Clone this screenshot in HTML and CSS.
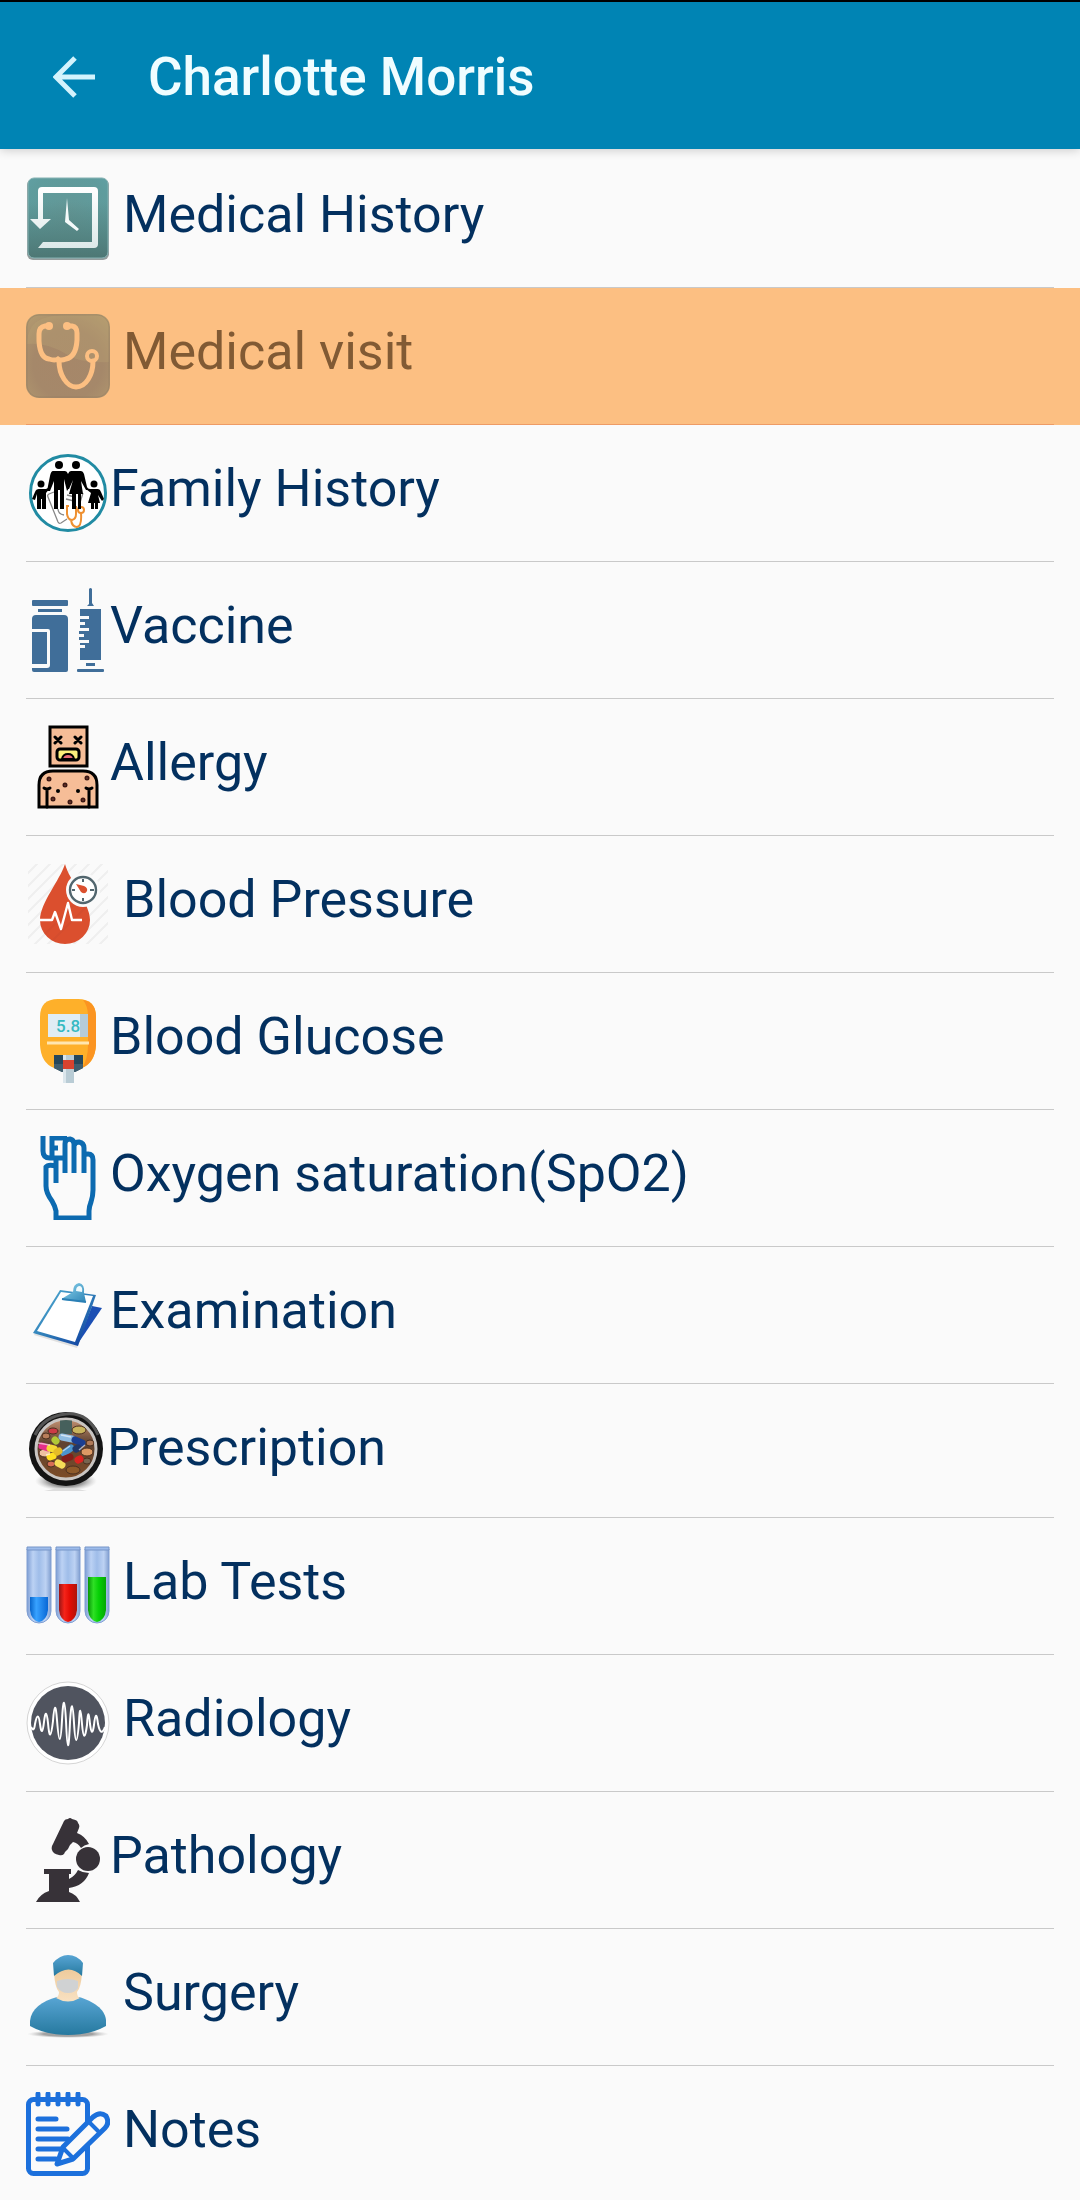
FILE: index.html
```html
<!DOCTYPE html>
<html lang="en">
<head>
<meta charset="UTF-8">
<meta name="viewport" content="width=device-width, initial-scale=1">
<title>Charlotte Morris</title>
<link rel="stylesheet" href="styles.css">
</head>
<body>

<!-- App bar -->
<header class="app-bar">
  <button class="back" type="button" aria-label="Back">
    <svg viewBox="0 0 42 42"><path d="M42 21H5M22 2L3 21l19 19" fill="none" stroke="#d3f3fd" stroke-width="5"/></svg>
  </button>
  <h1>Charlotte Morris</h1>
</header>

<!-- Record menu -->
<nav class="menu">
  <a class="item" href="#history">
    <svg class="icon" viewBox="0 0 84 84">
      <defs>
        <radialGradient id="teal" cx=".5" cy=".45" r=".75"><stop offset="0" stop-color="#639796"/><stop offset=".7" stop-color="#5f9c9d"/><stop offset="1" stop-color="#62a1a6"/></radialGradient>
        <linearGradient id="tealDark" x2="0" y2="1"><stop offset=".3" stop-color="#4d7774" stop-opacity="0"/><stop offset="1" stop-color="#4d7774"/></linearGradient>
        <linearGradient id="silver" x2="0" y2="1"><stop offset="0" stop-color="#fff"/><stop offset="1" stop-color="#dde9e9"/></linearGradient>
      </defs>
      <rect x="1" y="2" width="82" height="81" rx="6" fill="#949c9c"/>
      <rect x="2" y="1" width="80" height="80" rx="6" fill="url(#teal)"/>
      <rect x="2" y="1" width="80" height="80" rx="6" fill="url(#tealDark)" stroke="#85b2b3"/>
      <path d="M12 42V14q0-4 4-4h52q4 0 4 4v53q0 4-4 4H12l5-6h49V16H17v26h8L14 52 4 42z" fill="url(#silver)"/>
      <path d="M41 21l2 22 10 9-2 2-12-9z" fill="#f5fafa"/>
    </svg>
    <span class="label spaced">Medical History</span>
  </a>

  <a class="item selected" href="#visit">
    <svg class="icon" viewBox="0 0 84 84">
      <defs>
        <radialGradient id="brown" cx=".5" cy=".6" r=".75"><stop offset="0" stop-color="#a68769"/><stop offset=".55" stop-color="#a5886a"/><stop offset="1" stop-color="#b39b70"/></radialGradient>
      </defs>
      <rect width="84" height="84" rx="13" fill="url(#brown)"/>
      <path d="M1 30C2 4 20 2 40 1h30q13 0 13 13v34q-28 2-43-8Q20 28 1 30z" fill="#bea575" opacity=".3"/>
      <rect x="1" y="1" width="82" height="82" rx="12" fill="none" stroke="#8f7b61" stroke-opacity=".4"/>
      <g fill="none" stroke="#fcbf82" stroke-width="5" stroke-linecap="round">
        <path d="M23 12h-4q-6 1-6 8v7q1 17 10 18 6 2 9 0 3 2 8 0 10-2 11-19v-7q0-6-5-7h-4M33 47c0 14 8 26 17 26 10 0 17-12 17-26"/>
        <circle cx="66" cy="42" r="5" stroke-width="4"/>
      </g>
      <circle cx="23" cy="12" r="4" fill="#fcbf82"/>
      <circle cx="41" cy="12" r="4" fill="#fcbf82"/>
    </svg>
    <span class="label spaced">Medical visit</span>
  </a>

  <a class="item" href="#family">
    <svg class="icon" viewBox="0 0 84 84">
      <circle cx="42" cy="42" r="37.500" fill="#fff" stroke="#218ba3" stroke-width="3"/>
      <g fill="none" stroke="#888" stroke-width="1.300">
        <path d="M28 41l-5 2q-2 1-1 3l10 25q1 2 3 1l6-4M57 42l-5 16M41 44l8 2M40 48l8 2M32 58q0 5 6 6"/>
      </g>
      <g fill="none" stroke="#ee9031" stroke-width="2">
        <path d="M43 55h-2v8q1 6 5 6 4-1 4-6v-7h-2M45 69q1 7 6 7 5-1 4-14"/>
        <circle cx="55" cy="59" r="3"/>
      </g>
      <circle cx="33" cy="14" r="4"/><circle cx="50" cy="14" r="4"/>
      <circle cx="15" cy="33" r="3.500"/><circle cx="68" cy="33" r="3.500"/>
      <!-- parents -->
      <path d="M27 20h12q2 0 3 3l1 14-2 3-3-12v30h-4V39h-2v19h-4V30l-4 10h-3l3-15q1-5 3-5z"/>
      <path d="M45 20h10q2 0 3 3l3 13 2 3h-3l-5-9 2 13h-2v15h-3V43h-2v15h-4V43h-3l4-14-4 9h-2l1-15q1-3 3-3z"/>
      <!-- children -->
      <path d="M24 37l-4 5v16h-4V48h-1v10h-4V43l-2 6-3-1 3-7q1-3 4-3h7l4-2zM60 37l4 1h8q2 0 3 3l3 7-2 2-4-6 2 8h-2v6h-3v-6h-1v6h-3v-6h-3l3-10-5-4z"/>
    </svg>
    <span class="label">Family History</span>
  </a>

  <a class="item" href="#vaccine">
    <svg class="icon" viewBox="0 0 84 84" fill="#406e99">
      <rect x="6" y="12" width="36" height="6" rx="1"/>
      <rect x="12" y="21" width="24" height="3"/>
      <path d="M10 27h28q4 0 4 4v51q0 2-2 2H8q-2 0-2-2v-2h15q3 0 3-3V43q0-2-2-2H6V31q0-4 4-4z"/>
      <path d="M6 44h15v32H6zM63 1q1.500-2 3 0v14l2 3h-7l2-2zM54 21h21v51H54v-12h5v-3h-5v-2h9v-3H53v-3h5v-3h-5v-3h10v-3h-9v-3h5v-3h-5v-3h9v-3h-9zM60 75h9v3h-9z"/>
      <rect x="51" y="81" width="27" height="3" rx="1"/>
    </svg>
    <span class="label">Vaccine</span>
  </a>

  <a class="item" href="#allergy">
    <svg class="icon" viewBox="0 0 84 84">
      <g fill="#f6bd97" stroke="#000" stroke-width="3">
        <path d="M24 2h37v39H24zM13 82V60q0-14 14-14h30q14 0 14 14v22z"/>
        <rect x="31" y="24" width="22" height="11" rx="3" fill="#fcf07c"/>
      </g>
      <path d="M36 34q1-5 6-5t6 5z" fill="#e86a76" stroke="#000" stroke-width="2"/>
      <path d="M29 12l6 6m0-6l-6 6M49 12l6 6m0-6l-6 6M21 82V64M63 82V64M18 63q3 2 6 0M60 63q3 2 6 0" fill="none" stroke="#000" stroke-width="3" stroke-linecap="round"/>
      <g fill="#f08678" stroke="#3a1712" stroke-width="2"><circle cx="23" cy="54" r="1.500"/><circle cx="39" cy="60" r="1.500"/><circle cx="61" cy="53" r="1.500"/><circle cx="27" cy="74" r="1.500"/><circle cx="44" cy="77" r="1.500"/><circle cx="57" cy="75" r="1.500"/></g>
      <circle cx="32" cy="66" r="2"/><circle cx="52" cy="66" r="2"/>
    </svg>
    <span class="label">Allergy</span>
  </a>

  <a class="item" href="#pressure">
    <svg class="icon" viewBox="0 0 84 84">
      <defs>
        <pattern id="hatch" width="13" height="13" patternUnits="userSpaceOnUse"><path d="M-3 16L16-3M-3 3L3-3M10 16l6-6" stroke="#efefef" stroke-width="2"/></pattern>
        <clipPath id="drop"><path d="M39 2C34 18 14 41 14 58a25 24 0 0 0 50 0C64 41 43 18 39 2z"/></clipPath>
      </defs>
      <rect x="2" y="2" width="80" height="80" fill="url(#hatch)"/>
      <path d="M39 2C34 18 14 41 14 58a25 24 0 0 0 50 0C64 41 43 18 39 2z" fill="#db502f"/>
      <path d="M10 81l56-56M24 81l42-42" stroke="#c54b31" stroke-width="2" opacity=".3" clip-path="url(#drop)"/>
      <path d="M14 58h12l3-8 6 17 7-26 4 17h10" fill="none" stroke="#fff" stroke-width="2.400" stroke-linejoin="round"/>
      <circle cx="57" cy="28" r="17" fill="#fafafa"/>
      <circle cx="57" cy="28" r="13" fill="#fff" stroke="#52666e" stroke-width="2.400"/>
      <path d="M57 17v3M57 36v3M46 28h3M64 28h4" stroke="#52666e" stroke-width="2"/>
      <path d="M50 22l8 2q4 2 3 5-2 4-6 1z" fill="#db502f"/>
    </svg>
    <span class="label spaced">Blood Pressure</span>
  </a>

  <a class="item" href="#glucose">
    <svg class="icon" viewBox="0 0 84 84">
      <path d="M14 18Q14 0 32 0h20q18 0 18 18v28q-1 18-14 23l-14 4-14-4Q15 64 14 46z" fill="#feb02a"/>
      <path d="M57 1q13 2 13 17v28q-1 17-14 23 6-9 6-23V17q0-10-5-16z" fill="#fb9421"/>
      <path d="M22 15h40v23H22z" fill="#e0edf5"/><path d="M54 15h8v23h-8z" fill="#b5cbd8"/>
      <text class="reading" x="30" y="33">5.8</text>
      <path d="M21 44h42" stroke="#ffe6b0" stroke-width="3"/>
      <path d="M28 56h29v13l-8 4H36l-8-4z" fill="#26475b"/>
      <path d="M28 65h29v4l-8 4H36l-8-4z" fill="#3f5d6e"/>
      <path d="M37 56h11v28H37z" fill="#b9ccd5"/><path d="M37 56h3v28h-3z" fill="#dbe6ec"/>
      <path d="M37 61h11v9H37z" fill="#d8432f"/>
    </svg>
    <span class="label">Blood Glucose</span>
  </a>

  <a class="item" href="#oxygen">
    <svg class="icon" viewBox="0 0 84 84">
      <g fill="none" stroke="#0c6ab0" stroke-width="5">
        <path d="M17 0v15q0 7 7 7h14M26 22V2h15M27 12h5M30 47V23M39 37V8q0-5 5-5 4 1 4 5v29M48 10q1-4 5-4 5 1 5 6v25M58 20q0-2 4-2 5 0 5 6v30q0 6-2 12-2 5-2 9v7H30v-7q-1-5-4-10-6-8-6-15V31q2-3 10-1"/>
      </g>
    </svg>
    <span class="label">Oxygen saturation(SpO2)</span>
  </a>

  <a class="item" href="#examination">
    <svg class="icon" viewBox="0 0 84 84">
      <defs>
        <linearGradient id="board" x2="1" y2="1"><stop offset="0" stop-color="#56b5d6"/><stop offset=".5" stop-color="#2f7db8"/><stop offset="1" stop-color="#0a339c"/></linearGradient>
        <linearGradient id="clip" x2="1" y2="1"><stop offset="0" stop-color="#8ed5ee"/><stop offset="1" stop-color="#2e85b6"/></linearGradient>
      </defs>
      <path d="M66 33l10 2-25 37z" fill="#1b4fb4"/>
      <path d="M35 20l34 4-18 51-43-13z" fill="#777" opacity=".2"/>
      <path d="M34 17l36 5-18 51L7 60z" fill="url(#board)"/>
      <path d="M35 19l32 4-18 46-38-11z" fill="#fff"/>
      <path d="M37 25l10-6q0-8 6-9 6 1 5 10l2 9-24-2z" fill="url(#clip)"/>
      <path d="M50 18q0-5 4-5 3 1 2 6z" fill="#f0fafd"/>
      <path d="M36 26l24 3" stroke="#2a7fb5" stroke-width="2"/>
    </svg>
    <span class="label">Examination</span>
  </a>

  <a class="item" href="#prescription">
    <svg class="icon icon-small" viewBox="0 0 81 81">
      <defs>
        <radialGradient id="shade"><stop offset="0" stop-color="#222"/><stop offset=".6" stop-color="#666" stop-opacity=".6"/><stop offset="1" stop-color="#aaa" stop-opacity="0"/></radialGradient>
        <linearGradient id="bowl" x2="0" y2="1"><stop offset="0" stop-color="#c49273"/><stop offset=".4" stop-color="#604331"/><stop offset="1" stop-color="#7d4c27"/></linearGradient>
        <clipPath id="lens"><circle cx="40" cy="39" r="29"/></clipPath>
      </defs>
      <ellipse cx="40" cy="71" rx="31" ry="10" fill="url(#shade)"/>
      <path d="M18 81q22-6 43 0z" fill="#ddd"/>
      <circle cx="40" cy="39" r="37" fill="#141414"/>
      <path d="M9 25Q18 6 40 4t32 21" fill="none" stroke="#555" stroke-width="3"/>
      <circle cx="40" cy="39" r="30" fill="url(#bowl)" stroke="#c9c5c2" stroke-width="3"/>
      <g clip-path="url(#lens)">
        <path d="M34 8h12v16H34z" fill="#46605c"/>
        <g stroke="#4b3020" stroke-width="1">
          <ellipse cx="53" cy="20" rx="7" ry="4" fill="#c9b45d"/>
          <ellipse cx="27" cy="21" rx="5" ry="3" fill="#cc3b46"/>
          <ellipse cx="20" cy="26" rx="4" ry="3" fill="#b97d5a"/>
          <ellipse cx="19" cy="43" rx="6" ry="4" fill="#eec1a0"/>
          <ellipse cx="61" cy="42" rx="6" ry="4" fill="#dd9a64"/>
          <ellipse cx="64" cy="33" rx="4" ry="3" fill="#b07a58"/>
          <ellipse cx="47" cy="60" rx="7" ry="4" fill="#8f5b2b"/>
          <ellipse cx="25" cy="54" rx="4" ry="3" fill="#d86c56"/>
          <ellipse cx="61" cy="51" rx="4" ry="3" fill="#77644f"/>
        </g>
        <g stroke-width="7" stroke-linecap="round">
          <path d="M36 27l10 2" stroke="#8fbce2"/><path d="M49 30l7 3" stroke="#1c3f91"/>
          <path d="M16 36l6 2" stroke="#e7308a"/><path d="M24 38l4 1" stroke="#f6d936"/>
          <path d="M29 30l1 1" stroke="#b1c938"/><path d="M38 43l7-5" stroke="#4b93cc"/>
          <path d="M24 47l3-1" stroke="#ffdf22"/><path d="M32 53l4 2" stroke="#f6dc58"/>
          <path d="M39 49l5-2" stroke="#831e19"/><path d="M52 50l2-1" stroke="#dc2422"/>
          <path d="M50 39l2-1" stroke="#213869"/><path d="M31 42l2-1" stroke="#e6bc29"/>
        </g>
        <path d="M12 33l12 2M35 25l10 2M37 41l7-5M53 40l6-5M20 45l4-1" stroke="#fff" stroke-width="1.500" opacity=".6"/>
      </g>
    </svg>
    <span class="label">Prescription</span>
  </a>

  <a class="item" href="#lab">
    <svg class="icon" viewBox="0 0 84 84">
      <defs>
        <linearGradient id="glass"><stop offset="0" stop-color="#7e9ed4"/><stop offset=".25" stop-color="#bcd2f4"/><stop offset=".5" stop-color="#9fbde9"/><stop offset=".78" stop-color="#bdd2f3"/><stop offset="1" stop-color="#819fd0"/></linearGradient>
        <linearGradient id="blue"><stop offset="0" stop-color="#0865cb"/><stop offset=".35" stop-color="#38a2ff"/><stop offset="1" stop-color="#0867d6"/></linearGradient>
        <linearGradient id="red"><stop offset="0" stop-color="#9a1515"/><stop offset=".3" stop-color="#f5241a"/><stop offset=".6" stop-color="#e30c05"/><stop offset="1" stop-color="#ae140b"/></linearGradient>
        <linearGradient id="green"><stop offset="0" stop-color="#079607"/><stop offset=".3" stop-color="#2fdf25"/><stop offset=".6" stop-color="#06d006"/><stop offset="1" stop-color="#05a704"/></linearGradient>
      </defs>
      <g fill="url(#glass)" stroke="#809fd3">
        <path d="M1 5h24v62a12 12 0 0 1-24 0z"/>
        <path d="M30 5h24v62a12 12 0 0 1-24 0z"/>
        <path d="M59 5h24v62a12 12 0 0 1-24 0z"/>
      </g>
      <path d="M4 53h18v13q-1 10-9 12-8-2-9-12z" fill="url(#blue)"/>
      <path d="M33 40h18v26q-1 10-9 12-8-2-9-12z" fill="url(#red)"/>
      <path d="M62 33h18v33q-1 10-9 12-8-2-9-12z" fill="url(#green)"/>
      <path d="M1 3h24v3H1zM30 3h24v3H30zM59 3h24v3H59z" fill="#9dbceb" stroke="#7795c8"/>
    </svg>
    <span class="label spaced">Lab Tests</span>
  </a>

  <a class="item" href="#radiology">
    <svg class="icon" viewBox="0 0 84 84">
      <circle cx="42" cy="42" r="41" fill="#fff" stroke="#d5d5d5"/>
      <circle cx="42" cy="42" r="37" fill="#50545f"/>
      <path d="M5 46Q8 52 9 43 12 28 14 43 16 58 18 41 20 24 22 42 24 66 27 40 29 14 31 39 34 77 36 39 38 4 40 40 42 88 44 41 46 9 48 42 50 76 53 42 54 17 56 43 58 66 61 44 62 23 64 43 66 58 68 44 70 26 72 43Q75 57 79 46" fill="none" stroke="#fff" stroke-width="2" stroke-linejoin="round"/>
    </svg>
    <span class="label spaced">Radiology</span>
  </a>

  <a class="item" href="#pathology">
    <svg class="icon" viewBox="0 0 84 84" fill="#373238">
      <path d="M38 3q1-2 4-2 2-2 4 0 6 1 6 4 2 2 1 5l-2 5q8 3 12 11-5 1-8 4-3-5-8-6-4 3-5 7-2 2-3 3l-1 2q-2 2-5 1-6-1-7-5-1-3 1-6z"/>
      <circle cx="62" cy="41" r="12"/>
      <path d="M18 51h27v5h-2v5q6-3 9-9 5 3 11 3-5 13-20 15v4q7 2 11 10H10q4-8 13-11V56h-5z"/>
    </svg>
    <span class="label">Pathology</span>
  </a>

  <a class="item" href="#surgery">
    <svg class="icon" viewBox="0 0 84 84">
      <defs>
        <linearGradient id="scrubs" x2="0" y2="1"><stop offset="0" stop-color="#58a5d4"/><stop offset="1" stop-color="#26799f"/></linearGradient>
        <linearGradient id="skin" x2="0" y2="1"><stop offset="0" stop-color="#edc999"/><stop offset="1" stop-color="#f8e1c2"/></linearGradient>
        <radialGradient id="floor"><stop offset=".6" stop-color="#a2a2a2"/><stop offset="1" stop-color="#ccc" stop-opacity="0"/></radialGradient>
      </defs>
      <ellipse cx="42" cy="79" rx="41" ry="4" fill="url(#floor)"/>
      <path d="M4 66c1-12 12-20 27-24h22c14 4 26 12 27 23v6q-16 9-38 9T4 71z" fill="url(#scrubs)"/>
      <path d="M28 18q14-12 28 0-1 15-5 19 0 5 3 6-12 7-24 0 3-2 3-6-4-4-5-19z" fill="url(#skin)"/>
      <path d="M31 26q11-4 21 0v7q-3 5-10 5t-11-6z" fill="#d0d2d3"/>
      <path d="M27 8q7-8 15-8 9 0 15 8l-1 13q-13-13-28 0z" fill="url(#scrubs)"/>
    </svg>
    <span class="label spaced">Surgery</span>
  </a>

  <a class="item" href="#notes">
    <svg class="icon" viewBox="0 0 84 84">
      <g fill="none" stroke="#1c70dc" stroke-width="5" stroke-linecap="round" stroke-linejoin="round">
        <rect x="2.500" y="7.500" width="59" height="74" rx="5"/>
        <path d="M12 2v10M22 2v10M32 2v10M42 2v10M52 2v10M12 27h18M12 37h29M12 47h30M12 57h24M12 67h18"/>
        <path d="M31 72l6-17 30-30q7-6 13-1 4 7-1 12L47 67z" fill="#fafafa"/>
        <path d="M63 30l9 9M38 57l9 9" stroke-width="4"/>
      </g>
    </svg>
    <span class="label spaced">Notes</span>
  </a>
</nav>

</body>
</html>
```

FILE: styles.css
```css
* { box-sizing: border-box; }

body {
  margin: 0;
  font-family: Roboto, "Liberation Sans", sans-serif;
  background: #fafafa;
  color: #03305f;
}

/* App bar */
.app-bar {
  display: flex;
  align-items: center;
  gap: 53px;
  height: 149px;
  padding: 2px 53px 0;
  border-top: 2px solid #000;
  background: #0084b4;
  box-shadow: 0 1px 10px rgba(0,0,0,0.2);
}
.app-bar h1 {
  margin: 0;
  font-size: 53px;
  font-weight: 500;
  line-height: 64px;
  color: #f0fdff;
}

.back {
  width: 42px;
  height: 42px;
  padding: 0;
  border: none;
  background: none;
  cursor: pointer;
}
.back svg { display: block; }

/* Menu */
.menu { padding-top: 2px; }

.item {
  display: flex;
  flex-wrap: wrap;
  align-items: flex-start;
  padding: 26px 26px 0;
  color: inherit;
  text-decoration: none;
}
/* divider is inset, the highlight runs edge to edge */
.item::after {
  content: "";
  flex: 0 0 100%;
  height: 1px;
  margin-top: 26px;
  background: #c9c9c9;
}
.item:last-child::after { display: none; }

.item.selected {
  background: #fcbf82;
  color: #815a34;
}
.item.selected::after { background: #ee9b65; }

.icon {
  flex: none;
  width: 84px;
  height: 84px;
}
.icon-small {
  width: 81px;
  height: 81px;
}

.label {
  font-size: 52px;
  line-height: 76px;
}
.spaced { margin-left: 13px; }

.reading {
  font-size: 17px;
  font-weight: 500;
  fill: #36b9c2;
}
```
